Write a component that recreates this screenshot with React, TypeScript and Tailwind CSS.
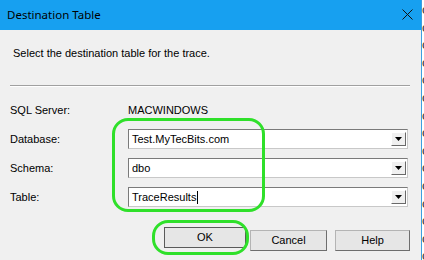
import React from 'react';

const uiFont = { fontFamily: '"Liberation Sans", Arial, sans-serif' };

const ComboBox = ({ value, caret = false }: { value: string; caret?: boolean }) => (
  <div className="flex h-[20px] w-[280px] items-stretch border border-[#7a7a7a] border-b-[#c8c8c8] border-r-[#c8c8c8] bg-white">
    <div className="flex flex-1 items-center pl-[3px] text-[11px] text-black">
      {value}
      {caret && <span className="ml-[1px] inline-block h-[13px] w-[1px] bg-black" />}
    </div>
    <div className="my-[2px] mr-[1px] flex w-[15px] items-center justify-center border border-white border-b-[#696969] border-r-[#696969] bg-[#f0f0f0]">
      <svg width="7" height="4" viewBox="0 0 7 4">
        <polygon points="0,0 7,0 3.5,4" fill="#000" />
      </svg>
    </div>
  </div>
);

const Row = ({ label, children }: { label: string; children: React.ReactNode }) => (
  <div className="flex h-[20px] items-center">
    <div className="w-[118px] text-[11px] text-black">{label}</div>
    {children}
  </div>
);

const DialogButton = ({ label, width, isDefault = false }: { label: string; width: string; isDefault?: boolean }) => (
  <button
    className={
      'h-[21px] text-[11px] text-black bg-[#e6e6e6] border ' +
      width +
      (isDefault ? ' border-[#5a5a5a]' : ' border-[#b4b4b4] border-b-[#6e6e6e] border-r-[#6e6e6e]')
    }
  >
    {label}
  </button>
);

export default function App() {
  return (
    <div className="relative flex h-[260px] w-[424px] overflow-hidden bg-white" style={uiFont}>
      {/* dialog */}
      <div className="flex h-full w-[421px] flex-col bg-[#f0f0f0]">
        <div className="flex h-[30px] items-center justify-between bg-[#17a0f0] pl-[7px] pr-[8px]">
          <span className="text-[11.5px] text-black" style={{ fontFamily: '"Noto Sans", "Open Sans", sans-serif' }}>
            Destination Table
          </span>
          <svg width="11" height="11" viewBox="0 0 11 11" className="mt-[-2px]">
            <path d="M0.5 0.5 L10.5 10.5 M10.5 0.5 L0.5 10.5" stroke="#111" strokeWidth="1" />
          </svg>
        </div>

        <div className="pl-[13px] pt-[15px] text-[11px] leading-[16px] text-black">
          Select the destination table for the trace.
        </div>

        <div className="ml-[10px] mt-[24px] w-[400px] border-t border-[#a0a0a0] border-b border-b-white" />

        <div className="flex flex-col gap-[9px] pl-[10px] pt-[13px]">
          <Row label="SQL Server:">
            <span className="text-[11px] text-black">MACWINDOWS</span>
          </Row>
          <Row label="Database:">
            <ComboBox value="Test.MyTecBits.com" />
          </Row>
          <Row label="Schema:">
            <ComboBox value="dbo" />
          </Row>
          <Row label="Table:">
            <ComboBox value="TraceResults" caret />
          </Row>
        </div>

        <div className="mt-[20px] flex items-start pl-[164px]">
          <DialogButton label="OK" width="w-[82px]" isDefault />
          <div className="ml-[4px]">
            <DialogButton label="Cancel" width="w-[77px]" />
          </div>
          <div className="ml-[8px]">
            <DialogButton label="Help" width="w-[75px]" />
          </div>
        </div>
      </div>

      {/* dialog edge + window behind */}
      <div className="h-full w-[1px] bg-[#3c9fe0]" />
      <div className="h-full w-[2px] overflow-hidden bg-white pt-[1px] text-[13px] leading-[17.6px] text-[#333]">
        {Array.from({ length: 15 }).map((_, i) => (
          <div key={i}>c</div>
        ))}
      </div>

      {/* green annotations */}
      <div className="pointer-events-none absolute left-[112px] top-[118px] h-[94px] w-[153px] rounded-[16px] border-[3px] border-[#2fe02a]" />
      <div className="pointer-events-none absolute left-[152px] top-[220px] h-[35px] w-[97px] rounded-[16px] border-[3px] border-[#2fe02a]" />
    </div>
  );
}
